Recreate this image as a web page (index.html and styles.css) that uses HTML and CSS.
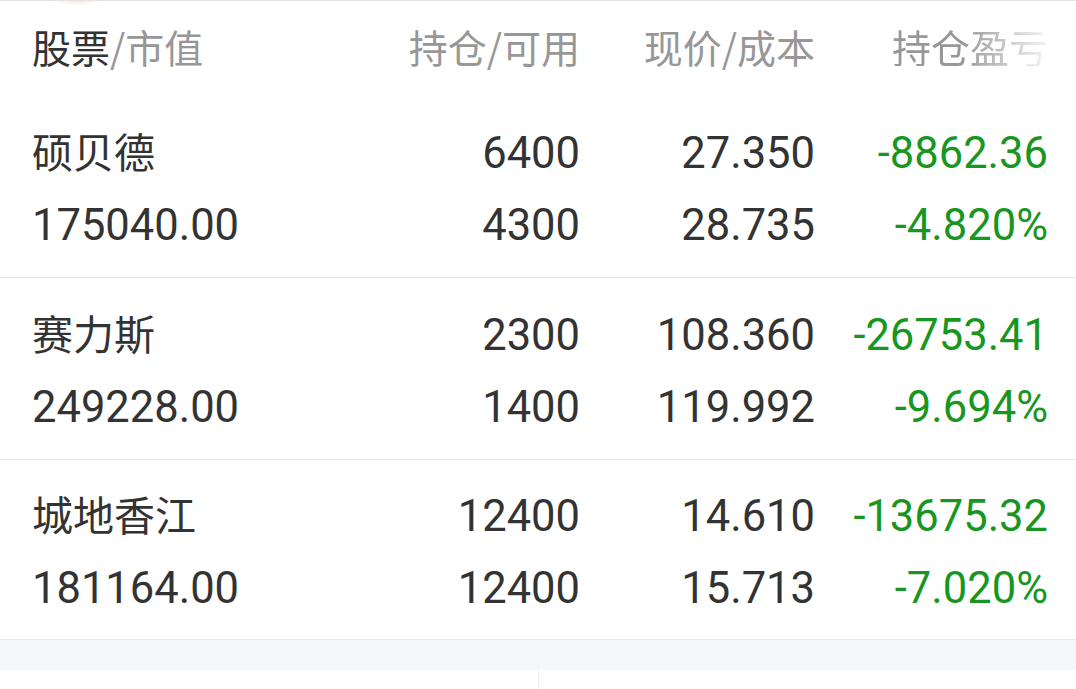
FILE: index.html
```html
<!DOCTYPE html>
<html lang="zh-CN">
<head>
<meta charset="utf-8">
<link rel="stylesheet" href="styles.css">
</head>
<body>
<div class="page">
  <div class="glow"></div>
  <div class="grid head">
    <div class="c1"><span class="dark">股票</span>/市值</div>
    <div class="cr">持仓/可用</div>
    <div class="cr">现价/成本</div>
    <div class="cr fade">持仓盈亏</div>
  </div>

  <div class="grid row first">
    <div class="name">硕贝德</div>
    <div class="num">6400</div>
    <div class="num">27.350</div>
    <div class="num green">-8862.36</div>
    <div class="num left">175040.00</div>
    <div class="num">4300</div>
    <div class="num">28.735</div>
    <div class="num green">-4.820%</div>
  </div>

  <div class="grid row">
    <div class="name">赛力斯</div>
    <div class="num">2300</div>
    <div class="num">108.360</div>
    <div class="num green">-26753.41</div>
    <div class="num left">249228.00</div>
    <div class="num">1400</div>
    <div class="num">119.992</div>
    <div class="num green">-9.694%</div>
  </div>

  <div class="grid row third">
    <div class="name">城地香江</div>
    <div class="num">12400</div>
    <div class="num">14.610</div>
    <div class="num green">-13675.32</div>
    <div class="num left">181164.00</div>
    <div class="num">12400</div>
    <div class="num">15.713</div>
    <div class="num green">-7.020%</div>
  </div>

  <div class="grid row last"></div>

  <div class="band"></div>
  <div class="bottom">
    <div class="half"></div>
    <div class="half"></div>
  </div>
</div>
</body>
</html>
```

FILE: styles.css
```css
html, body {
  margin: 0;
  padding: 0;
  background: #ffffff;
}
.page {
  position: relative;
  width: 1076px;
  height: 689px;
  overflow: hidden;
  border-top: 1px solid #e3e3e3;
  box-sizing: border-box;
  font-family: "Noto Sans CJK SC", "Noto Sans", sans-serif;
  color: #333333;
}
.glow {
  position: absolute;
  left: 52px;
  top: -6px;
  width: 50px;
  height: 10px;
  border-radius: 50%;
  background: radial-gradient(ellipse at center, rgba(255, 200, 140, 0.55), rgba(255, 220, 180, 0) 70%);
}
.grid {
  display: grid;
  grid-template-columns: 1fr 240px 235px 233px;
  padding: 0 28px 0 32px;
}
.head {
  height: 94px;
  box-sizing: border-box;
  padding-bottom: 4px;
  align-items: center;
  font-size: 39px;
  color: #979797;
  line-height: 1;
}
.head .dark { color: #333333; }
.cr { text-align: right; }
.fade {
  -webkit-mask-image: linear-gradient(to right, #000 0%, #000 62%, rgba(0,0,0,0.1) 100%);
  mask-image: linear-gradient(to right, #000 0%, #000 62%, rgba(0,0,0,0.1) 100%);
}
.row {
  border-top: 1px solid #e8e8e8;
  grid-auto-rows: 72px;
  padding-top: 20px;
  padding-bottom: 17px;
  align-items: center;
}
.row.first { border-top: 1px solid transparent; }
.row.third { padding-top: 19px; padding-bottom: 16px; }
.row.last { padding: 0; height: 0; }
.name {
  font-size: 41px;
  line-height: 1;
  padding-bottom: 4px;
  color: #333333;
}
.num {
  font-family: "Roboto", "Noto Sans", sans-serif;
  font-size: 43.5px;
  line-height: 1;
  padding-top: 4px;
  text-align: right;
  color: #333333;
}
.num.left { text-align: left; }
.green { color: #18961f; }
.band {
  height: 30px;
  background: #f5f6f8;
}
.bottom {
  display: flex;
  height: 30px;
}
.half { flex: 1; }
.half + .half { border-left: 1px solid #efefef; }
```
